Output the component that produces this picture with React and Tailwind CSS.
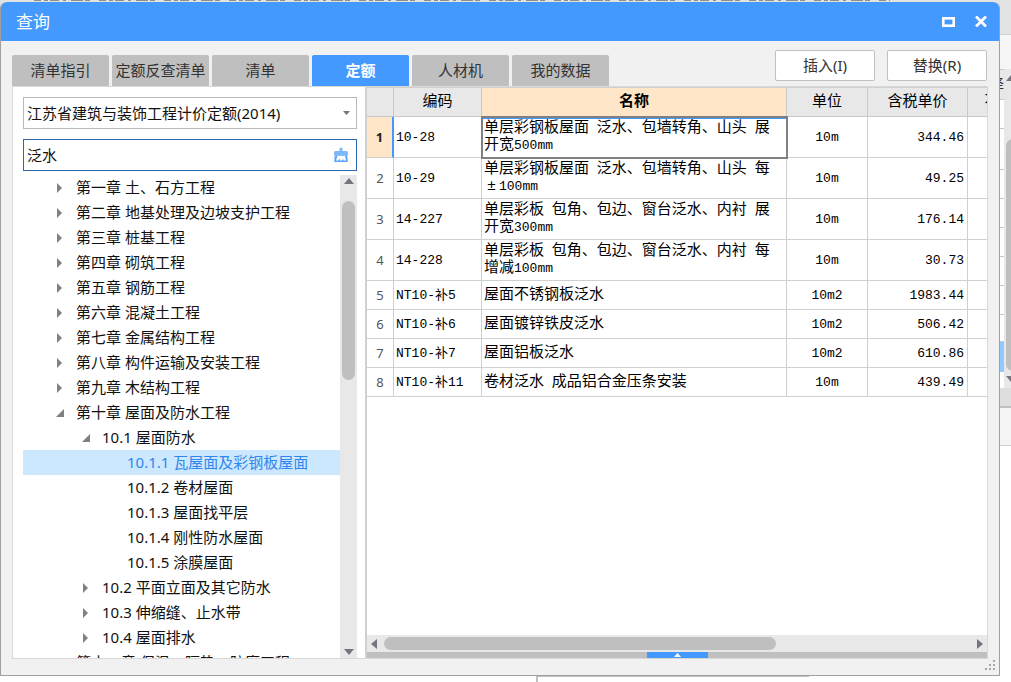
import React, { useState } from 'react';
import clsx from 'clsx';

const tabs = ['清单指引', '定额反查清单', '清单', '定额', '人材机', '我的数据'];

const tree = [
  { level: 0, label: '第一章 土、石方工程', state: 'closed' },
  { level: 0, label: '第二章 地基处理及边坡支护工程', state: 'closed' },
  { level: 0, label: '第三章 桩基工程', state: 'closed' },
  { level: 0, label: '第四章 砌筑工程', state: 'closed' },
  { level: 0, label: '第五章 钢筋工程', state: 'closed' },
  { level: 0, label: '第六章 混凝土工程', state: 'closed' },
  { level: 0, label: '第七章 金属结构工程', state: 'closed' },
  { level: 0, label: '第八章 构件运输及安装工程', state: 'closed' },
  { level: 0, label: '第九章 木结构工程', state: 'closed' },
  { level: 0, label: '第十章 屋面及防水工程', state: 'open' },
  { level: 1, label: '10.1 屋面防水', state: 'open' },
  { level: 2, label: '10.1.1 瓦屋面及彩钢板屋面' },
  { level: 2, label: '10.1.2 卷材屋面' },
  { level: 2, label: '10.1.3 屋面找平层' },
  { level: 2, label: '10.1.4 刚性防水屋面' },
  { level: 2, label: '10.1.5 涂膜屋面' },
  { level: 1, label: '10.2 平面立面及其它防水', state: 'closed' },
  { level: 1, label: '10.3 伸缩缝、止水带', state: 'closed' },
  { level: 1, label: '10.4 屋面排水', state: 'closed' },
  { level: 0, label: '第十一章 保温、隔热、防腐工程', state: 'closed' },
];

const indents = ['pl-[33px]', 'pl-[59px]', 'pl-[84px]'];

const rows = [
  { code: '10-28', name: '单层彩钢板屋面 泛水、包墙转角、山头 展开宽500mm', unit: '10m', price: '344.46', tall: true },
  { code: '10-29', name: '单层彩钢板屋面 泛水、包墙转角、山头 每±100mm', unit: '10m', price: '49.25', tall: true },
  { code: '14-227', name: '单层彩板 包角、包边、窗台泛水、内衬 展开宽300mm', unit: '10m', price: '176.14', tall: true },
  { code: '14-228', name: '单层彩板 包角、包边、窗台泛水、内衬 每增减100mm', unit: '10m', price: '30.73', tall: true },
  { code: 'NT10-补5', name: '屋面不锈钢板泛水', unit: '10m2', price: '1983.44' },
  { code: 'NT10-补6', name: '屋面镀锌铁皮泛水', unit: '10m2', price: '506.42' },
  { code: 'NT10-补7', name: '屋面铝板泛水', unit: '10m2', price: '610.86' },
  { code: 'NT10-补11', name: '卷材泛水 成品铝合金压条安装', unit: '10m', price: '439.49' },
];

function Arrow({ dir, className }) {
  const shapes = {
    up: '0,6 5,0 10,6',
    down: '0,0 10,0 5,6',
    left: '6,0 6,10 0,5',
    right: '0,0 6,5 0,10',
  };
  const upright = dir === 'left' || dir === 'right';
  return (
    <svg
      width={upright ? 6 : 10}
      height={upright ? 10 : 6}
      viewBox={upright ? '0 0 6 10' : '0 0 10 6'}
      className={className}
      fill="currentColor"
      aria-hidden="true"
    >
      <polygon points={shapes[dir]} />
    </svg>
  );
}

function TreeMark({ state }) {
  return (
    <svg width="8" height="10" viewBox="0 0 8 10" className="shrink-0 text-[#808080]" fill="currentColor" aria-hidden="true">
      {state === 'closed' && <polygon points="1,0 6,5 1,10" />}
      {state === 'open' && <polygon points="8,1 8,9 0,9" />}
    </svg>
  );
}

function BrushIcon() {
  return (
    <svg width="16" height="16" viewBox="0 0 16 16" aria-hidden="true">
      <path d="M6.5 1.2Q8 -0.4 9.5 1.2V4.5H6.5Z" fill="#7db8fb" />
      <path d="M2.5 4H13.5Q15 4 15 5.5V8.5H1V5.5Q1 4 2.5 4Z" fill="#7db8fb" />
      <path d="M1.8 8.5H14.2L14.8 14Q14.8 15 13.8 15H2.2Q1.2 15 1.2 14Z" fill="#5aa5fa" />
      <path d="M4.5 9H12L13 13.5H10.5L10.2 11.5L9 13.5H6.8L7 11.5L5 13.5H3Z" fill="#fff" />
    </svg>
  );
}

// Latin runs and spaces are set smaller so that they take half a CJK cell
function MixedText({ text }) {
  return text.split(/([\x20-\x7e]+|±)/).map((part, i) => {
    if (part === '±') return <span key={i} className="inline-block w-[15px] text-center">±</span>;
    return i % 2 ? <span key={i} className="text-[13px]">{part}</span> : part;
  });
}

function CatalogTree({ selected, onSelect }) {
  return (
    <div className="flex min-h-0 flex-1">
      <ul className="h-full min-w-0 flex-1 overflow-hidden">
        {tree.map((item) => (
          <li key={item.label}>
            <button
              type="button"
              onClick={() => onSelect(item.label)}
              className={clsx(
                'flex h-[25px] w-full items-center gap-3 whitespace-nowrap text-left',
                indents[item.level],
                selected === item.label ? 'bg-[#cce8ff] text-[#2f86ee]' : 'text-[#111]'
              )}
            >
              <TreeMark state={item.state} />
              {item.label}
            </button>
          </li>
        ))}
      </ul>
      <div className="flex w-[17px] flex-col items-center bg-[#e8e8e8] py-[3px] text-[#75757d]">
        <Arrow dir="up" />
        <div className="mt-[17px] h-[179px] w-[13px] rounded-full bg-[#bfbfbf]" />
        <Arrow dir="down" className="mt-auto" />
      </div>
    </div>
  );
}

function QuotaTable() {
  const [current, setCurrent] = useState(0);

  return (
    <div className="min-h-0 flex-1 overflow-hidden">
      <table className="w-[calc(100%+90px)] table-fixed border-separate border-spacing-0 font-['Liberation_Mono','Noto_Sans_CJK_SC',monospace] text-[13px] leading-[17px] text-black">
        <colgroup>
          <col className="w-[27px]" />
          <col className="w-[88px]" />
          <col />
          <col className="w-[81px]" />
          <col className="w-[100px]" />
          <col className="w-[109px]" />
        </colgroup>
        <thead>
          <tr className="h-[29px] bg-[#e8e8e8] text-[15px] [&>*]:border-r [&>*]:border-b [&>*]:border-[#c8c8c8] [&>*]:p-0 [&>*]:font-normal">
            <td />
            <th>编码</th>
            <th className="bg-[#ffe6c8]"><b>名称</b></th>
            <th>单位</th>
            <th>含税单价</th>
            <th>不含税单价</th>
          </tr>
        </thead>
        <tbody>
          {rows.map((row, i) => {
            const active = i === current;
            return (
              <tr
                key={row.code}
                onClick={() => setCurrent(i)}
                className={clsx('[&>*]:border-b [&>*]:border-[#d0d0d0] [&>*]:py-0', row.tall ? 'h-[41px]' : 'h-[29px]')}
              >
                <th
                  className={clsx(
                    "px-0 font-['Noto_Sans','Noto_Sans_CJK_SC',sans-serif] text-[13px]",
                    active ? 'border-r-2 border-r-[#4499ff]! bg-[#ffe6c8] font-bold text-[#222]' : 'border-r font-normal text-[#555]'
                  )}
                >
                  {i + 1}
                </th>
                <td className="border-r px-[2px]">{row.code}</td>
                <td
                  className={clsx(
                    'border-r pr-3 pl-[2px] text-[15px]',
                    active && 'outline-2 -outline-offset-1 outline-[#808080] shadow-[inset_0_2px_#4499ff]'
                  )}
                >
                  <MixedText text={row.name} />
                </td>
                <td className="border-r px-0 text-center">{row.unit}</td>
                <td className="border-r px-[3px] text-right">{row.price}</td>
                <td className="border-r" />
              </tr>
            );
          })}
        </tbody>
      </table>
    </div>
  );
}

// Sliver of the main window that shows right of the dialog
function BackdropEdge() {
  return (
    <div className="flex w-[11px] shrink-0 flex-col overflow-hidden bg-white" aria-hidden="true">
      <div className="h-[35px] border-b border-[#d0d0d0] bg-[#e3e3e3]" />
      <div className="h-[34px] bg-[#f6f6f6]" />
      <div className="flex h-[319px]">
        <div className="w-[4px] shrink-0">
          <div className="flex h-[31px] items-center justify-end overflow-hidden border-y border-[#c8c8c8] bg-[#e8e8e8] text-[#333]">择</div>
          <div className="h-[29px] border-b border-[#c8c8c8]" />
          <div className="h-[41px] border-b border-[#c8c8c8]" />
          <div className="h-[29px] border-b border-[#c8c8c8]" />
          <div className="h-[29px] border-b border-[#c8c8c8]" />
          <div className="h-[29px] border-b border-[#c8c8c8]" />
          <div className="h-[29px] border-b border-[#c8c8c8]" />
          <div className="h-[29px] border-b border-[#c8c8c8]" />
          <div className="h-[27px] border-b border-[#c8c8c8]" />
          <div className="h-[30px] bg-[#90c8ff]" />
        </div>
        <div className="flex flex-1 flex-col items-start overflow-hidden bg-[#e8e8e8] py-[6px] pl-[2px] text-[#75757d]">
          <Arrow dir="up" className="shrink-0" />
          <div className="mt-[58px] h-[232px] w-[13px] shrink-0 rounded-full bg-[#bfbfbf]" />
          <Arrow dir="down" className="mt-auto shrink-0" />
        </div>
      </div>
      <div className="h-5 border-b-2 border-[#c0c0c0] bg-[#dedede]" />
      <div className="h-[38px] border-b border-[#d0d0d0] bg-[#f5f5f5]" />
    </div>
  );
}

export default function App() {
  const [activeTab, setActiveTab] = useState('定额');
  const [keyword, setKeyword] = useState('泛水');
  const [selected, setSelected] = useState('10.1.1 瓦屋面及彩钢板屋面');

  return (
    <div className="flex h-screen flex-col overflow-hidden bg-white font-['Noto_Sans','Noto_Sans_CJK_SC',sans-serif] text-[15px]">
      <div className="flex min-h-0 flex-1">
        <div className="flex min-w-0 flex-1 flex-col bg-[#e3e3e3]">
          <svg width="100%" height="2" className="shrink-0" aria-hidden="true">
            <line x1="34" y1="0.5" x2="890" y2="0.5" stroke="#8d8d8d" strokeWidth="1" strokeDasharray="7 3 4 2 9 4 3 5 12 2 5 9" />
          </svg>
          <div className="flex min-h-0 flex-1 flex-col rounded-t-md border border-t-0 border-[#a0a0a0] bg-[#f1f1f1]">
            <header className="flex h-[39px] shrink-0 items-center justify-between rounded-t-md bg-[#4499ff] pr-3 pl-[15px] text-white">
              <h1 className="text-[17px]">查询</h1>
              <div className="flex items-center gap-5">
                <button type="button" aria-label="最大化">
                  <svg width="13" height="10" viewBox="0 0 13 10" fill="none" stroke="currentColor" strokeWidth="2.6">
                    <rect x="1.3" y="1.3" width="10.4" height="7.4" />
                  </svg>
                </button>
                <button type="button" aria-label="关闭">
                  <svg width="12" height="11" viewBox="0 0 12 11" fill="none" stroke="currentColor" strokeWidth="2.8">
                    <path d="M1 0.5L11 10.5M11 0.5L1 10.5" />
                  </svg>
                </button>
              </div>
            </header>

            <div className="flex shrink-0 justify-between pr-3 pl-[11px]">
              <div className="flex gap-[3px] pt-[14px]" role="tablist">
                {tabs.map((tab) => (
                  <button
                    key={tab}
                    type="button"
                    role="tab"
                    aria-selected={tab === activeTab}
                    onClick={() => setActiveTab(tab)}
                    className={clsx(
                      'h-[31px] w-[97px] rounded-t-xs whitespace-nowrap',
                      tab === activeTab ? 'bg-[#4499ff] font-bold text-white' : 'bg-[#bfbfbf] text-[#333]'
                    )}
                  >
                    {tab}
                  </button>
                ))}
              </div>
              <div className="flex gap-3 pt-[9px]">
                <button type="button" className="h-[31px] w-[100px] rounded-xs border border-[#c0c0c0] bg-white text-[#333]">插入(I)</button>
                <button type="button" className="h-[31px] w-[100px] rounded-xs border border-[#c0c0c0] bg-white text-[#333]">替换(R)</button>
              </div>
            </div>

            <main className="mr-[11px] ml-[11px] flex min-h-0 flex-1 border border-[#d8d8d8] bg-white">
              <section className="flex w-[352px] shrink-0 flex-col pt-[10px] pr-2 pl-[10px]">
                <div className="relative">
                  <select
                    aria-label="定额库"
                    className="block h-8 w-full appearance-none border border-[#b8b8b8] bg-white px-[3px] text-[#111] outline-none"
                  >
                    <option>江苏省建筑与装饰工程计价定额(2014)</option>
                  </select>
                  <svg width="7" height="4" viewBox="0 0 7 4" className="pointer-events-none absolute top-[14px] right-[7px]" fill="#777" aria-hidden="true">
                    <polygon points="0,0 7,0 3.5,4" />
                  </svg>
                </div>
                <div className="mt-[10px] mb-1 flex h-8 items-center border border-[#2f66b0] pr-[7px]">
                  <input
                    type="text"
                    aria-label="关键字"
                    value={keyword}
                    onChange={(e) => setKeyword(e.target.value)}
                    className="min-w-0 flex-1 px-[3px] text-[#111] outline-none"
                  />
                  <button type="button" aria-label="清空" onClick={() => setKeyword('')}>
                    <BrushIcon />
                  </button>
                </div>
                <CatalogTree selected={selected} onSelect={setSelected} />
              </section>

              <section className="flex min-w-0 flex-1 flex-col border-t border-l-2 border-[#d0d0d0]">
                <QuotaTable />
                <div className="flex h-[17px] shrink-0 items-center bg-[#e8e8e8] px-1 text-[#75757d]">
                  <Arrow dir="left" />
                  <div className="ml-[7px] h-[13px] w-[64%] rounded-full bg-[#bfbfbf]" />
                  <Arrow dir="right" className="ml-auto" />
                </div>
                <div className="flex h-[6px] shrink-0 justify-center bg-[#bfbfbf]">
                  <button type="button" aria-label="展开" className="flex w-[61px] items-center justify-center bg-[#4499ff] text-white">
                    <svg width="7" height="4" viewBox="0 0 7 4" fill="currentColor" aria-hidden="true">
                      <polygon points="3.5,0 7,4 0,4" />
                    </svg>
                  </button>
                </div>
              </section>
            </main>

            <footer className="flex h-4 shrink-0 justify-end pr-1">
              <svg width="10" height="10" viewBox="0 0 10 10" className="mt-px" fill="#a8a8a8" aria-hidden="true">
                <path d="M8 0h2v2h-2zM4 4h2v2h-2zM8 4h2v2h-2zM0 8h2v2h-2zM4 8h2v2h-2zM8 8h2v2h-2z" />
              </svg>
            </footer>
          </div>
        </div>
        <BackdropEdge />
      </div>
      <div className="flex h-[6px] shrink-0" aria-hidden="true">
        <div className="w-[53%]" />
        <div className="w-[27%] border-t border-l-2 border-[#c0c0c0]" />
      </div>
    </div>
  );
}
